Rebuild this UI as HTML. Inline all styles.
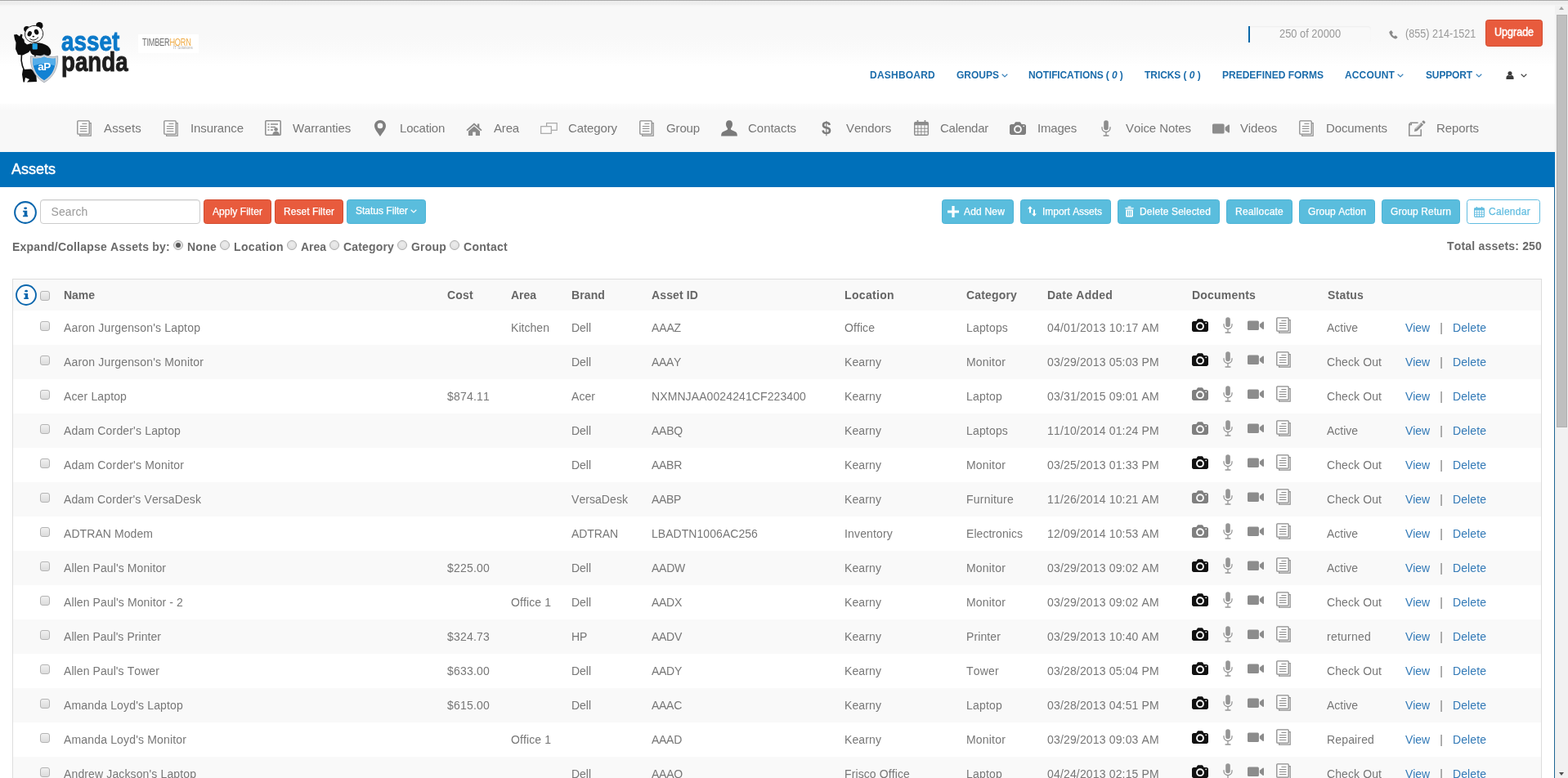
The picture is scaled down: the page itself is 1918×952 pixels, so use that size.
<!DOCTYPE html>
<html lang="en">
<head>
<meta charset="utf-8">
<title>Assets - Asset Panda</title>
<style>
*{box-sizing:border-box}
html,body{margin:0;padding:0;width:1918px;height:952px;overflow:hidden;background:#fff}
body{font-family:"Liberation Sans",sans-serif;font-size:14px;color:#777;position:relative;font-kerning:none}
a{text-decoration:none;color:inherit;cursor:pointer}
svg.ic{display:block}
#page{position:absolute;left:0;top:0;width:1902px;height:952px;overflow:hidden;will-change:transform}
.topline{position:absolute;left:0;top:0;width:1918px;height:8px;background:linear-gradient(#a9a9a9 0,#a9a9a9 1px,#f1f1f1 1px,#ededed 2.5px,#ededed 5px,#f4f4f4 6.5px,rgba(248,248,248,0) 8px);z-index:5}
/* header */
.hdr{position:absolute;left:0;top:0;width:1902px;height:127px;background:linear-gradient(#f8f8f8 0,#f8f8f8 44px,#fbfbfb 64px,#fff 82px,#fff 100%)}
.logo{position:absolute;left:0;top:0}
.logo .panda{position:absolute;left:16px;top:27px}
.logo .w1,.logo .w2{position:absolute;font-weight:700;white-space:nowrap;line-height:1;transform-origin:0 0;-webkit-text-stroke:.9px currentColor}
.logo .w1{left:74.6px;top:34.2px;font-size:33px;color:#0b79c9;transform:scaleX(.845)}
.logo .w2{left:75.2px;top:58.8px;font-size:33px;color:#1d1d1d;transform:scaleX(.84)}
.partner{position:absolute;left:169px;top:42px;width:74px;height:23px;background:#fff}
.partner span{position:absolute;white-space:nowrap;line-height:1;transform-origin:0 0}
.partner .t1{left:5px;top:3.5px;font-size:12.5px;color:#6e6e6e;transform:scaleX(.735);letter-spacing:-.3px}
.partner .t1 em{font-style:normal;color:#efab45}
.partner .t2{left:43px;top:13.5px;font-size:5px;color:#aaa;transform:scaleX(.9)}
.usage{position:absolute;left:1527px;top:32px;width:150px;height:20px;border-radius:4px;background:#f9f9f9;box-shadow:inset 0 1px 2px rgba(0,0,0,.05)}
.usage-bar{position:absolute;left:0;top:0;width:2px;height:20px;background:#0a68a8}
.usage-txt{position:absolute;left:38px;top:0;font-size:14px;line-height:18px;color:#999;white-space:nowrap}
.phone{position:absolute;left:1699px;top:31px;height:20px;font-size:14px;line-height:20px;color:#999;white-space:nowrap}
.phone svg{position:absolute;left:0;top:6px}
.phone span{position:absolute;left:20.4px;top:0}
.upgrade{position:absolute;left:1817px;top:24px;width:70px;height:33px;border-radius:3.5px;background:#e85b3d;border:1px solid #d24c30;color:#fff;font-size:14px;font-weight:400;-webkit-text-stroke:.45px #fff;line-height:29px;white-space:nowrap}
.upgrade span{position:absolute;left:10px;top:0}
.mainnav a{position:absolute;top:83px;height:18px;line-height:18px;font-size:12px;font-weight:700;color:#1b6cab;white-space:nowrap}
.mainnav a i{font-style:italic}
.mainnav a.usr{top:83px}
/* icon nav */
.iconnav{position:absolute;left:0;top:127px;width:1902px;height:59px;background:linear-gradient(#fcfcfc 0,#f8f8f8 9px,#f8f8f8 100%)}
.iconnav .nic{position:absolute;margin-top:-127px}
.iconnav .nt{position:absolute;top:19px;font-size:15px;line-height:22px;color:#777;white-space:nowrap}
.iconnav .dollar{position:absolute;margin-top:-127px;font-size:22px;line-height:20px;font-weight:700;color:#7a7a7a;transform:scaleX(.95);transform-origin:0 0}
/* panel */
.panel{position:absolute;left:-1px;top:186px;width:1903px;height:2000px;border:1px solid #1f6694;border-top:0;background:#fff}
.panel-head{position:absolute;left:0;top:0;width:1902px;height:43px;margin:0;background:#0070ba;color:#fff;font-size:18px;font-weight:400;-webkit-text-stroke:.4px #fff;line-height:43px;padding-left:14px;white-space:nowrap}
.toolbar{position:absolute;left:0;top:-186px}
svg.info{position:absolute}
.search{position:absolute;left:49px;top:244px;width:196px;height:30px;border:1px solid #ccc;border-radius:4px;background:#fff;box-shadow:inset 0 1px 1px rgba(0,0,0,.075)}
.search span{position:absolute;left:12.5px;top:5px;line-height:18px;font-size:14px;color:#999}
.btn{position:absolute;top:244px;height:30px;border-radius:3.5px;font-size:12px;line-height:28px;color:#fff;text-align:center;white-space:nowrap;border:1px solid transparent;-webkit-text-stroke:.25px currentColor}
.btn.red{background:#e85b3d;border-color:#d24c30}
.btn.blue{background:#5abddd;border-color:#4bb3d6}
.btn.outline{background:#fff;border-color:#62bde0;color:#62bde0}
.btn.up{line-height:26px}
.btn.abs svg{position:absolute}
.btn.abs .bt{position:absolute;top:0;text-align:left}
.btn svg{display:inline-block}
.expand{position:absolute;left:0;top:-186px}
.expand .lbl{position:absolute;top:293px;font-size:14px;line-height:18px;font-weight:700;color:#6a6a6a;white-space:nowrap}
.radio{position:absolute;top:294px;width:12px;height:12px;border-radius:50%;border:1px solid #acacac;background:radial-gradient(circle at 50% 40%,#ededed 0,#e0e0e0 70%,#d2d2d2 100%)}
.radio.on:after{content:"";position:absolute;left:2px;top:2px;width:6px;height:6px;border-radius:50%;background:#555}
/* table */
.tablewrap{position:absolute;left:15px;top:155px;width:1871px;border:1px solid #ddd;border-bottom:0}
table{border-collapse:collapse;table-layout:fixed;width:1869px;font-size:14px;color:#777}
th,td{padding:0 0 0 8px;text-align:left;white-space:nowrap;overflow:visible;vertical-align:middle;position:relative}
th{height:38px;font-weight:700;color:#666;background:#f9f9f9}
td{height:42px;font-weight:400}
tbody tr:nth-child(even) td{background:#f9f9f9}
th.c0,td.c0{padding:0}
.cb{position:absolute;left:33px;top:13px;width:12px;height:12px;border:1px solid #b4b4b4;border-radius:3px;background:linear-gradient(#f0f0f0,#dcdcdc)}
th .cb{top:14px}
td.docs svg{position:absolute}
td.act a{color:#337ab7}
td.act .sep{display:inline-block;width:28px;text-align:center;color:#777}
/* scrollbar */
#sb{position:absolute;left:1902px;top:0;width:16px;height:952px;background:#f1f1f1}
#sb .thumb{position:absolute;left:2px;top:18px;width:13px;height:505px;background:#bfbfbf;box-shadow:inset 0 0 0 1px #b0b0b0}
#sb .up,#sb .down{position:absolute;left:5px;width:0;height:0;border-left:3.5px solid transparent;border-right:3.5px solid transparent}
#sb .up{top:8px;border-bottom:4px solid #a3a3a3}
#sb .down{top:945px;border-top:4px solid #505050}

td.st{padding-left:7px}

</style>
</head>
<body>
<div id="page">
<header class="hdr">
<div class="logo">
<svg class="panda" width="56" height="75" viewBox="0 0 56 75" aria-hidden="true">
<!-- body / belly -->
<path d="M12 34 C9 42 10 52 14 60 L26 62 L27 40 L22 32 Z" fill="#fff" stroke="#111" stroke-width="1.6"/>
<!-- raised arm + pointing hand -->
<path d="M1 15.5 L4.5 15 L8 17.5 L9.5 14.5 L11.5 15.5 L11 19 L13.5 21.5 L14 25 L17 27.5 L22 26 L24 31 L19 37 L12 40.5 L6 40 L3 33 L3.5 25 L2 21 Z" fill="#0d0d0d"/>
<!-- leg -->
<path d="M12 58 L22 57.5 L28 62 L29 73 L17 73.5 L20 70 L15 68 L14 73.5 L12.5 73.5 L11 64 Z" fill="#0d0d0d"/>
<!-- head -->
<circle cx="16.8" cy="8.6" r="3.7" fill="#0d0d0d"/><circle cx="32.2" cy="4.4" r="4.3" fill="#0d0d0d"/>
<ellipse cx="25.6" cy="14.6" rx="11.2" ry="10.2" fill="#fff" stroke="#222" stroke-width=".9" transform="rotate(-12 25.6 14.6)"/>
<ellipse cx="20.2" cy="14.2" rx="2.5" ry="3.3" fill="#111" transform="rotate(25 20.2 14.2)"/>
<ellipse cx="28.6" cy="12.2" rx="2.6" ry="3.4" fill="#111" transform="rotate(-25 28.6 12.2)"/>
<ellipse cx="24.8" cy="17.6" rx="1.4" ry=".9" fill="#111"/>
<path d="M20.5 20.5 Q26 24.5 31 18.5" stroke="#111" stroke-width="1" fill="none"/>
<!-- torso + arm resting on shield -->
<path d="M21 27 C27 24 36 25 42 29 C46 32 47 36 46 39 C45 41 42 42 38 41.5 L25 40.5 C21 39 20 34 21 27 Z" fill="#0d0d0d"/>
<rect x="23.6" y="26.2" width="6.2" height="7.4" rx="1" fill="#1fa3e6"/>
<!-- shield -->
<path d="M21.4 41.6 C27 43.2 33 42.4 38 39.8 C43 42.4 49 43.2 54.6 41.6 C55.4 54 51 66.5 38 74 C25 66.5 20.6 54 21.4 41.6 Z" fill="#cfd4d9" stroke="#9097a0" stroke-width=".7"/>
<path d="M24 44.4 C29 45.4 34 44.6 38 42.6 C42 44.6 47 45.4 52 44.4 C52.4 55 48.6 65 38 71.2 C27.4 65 23.6 55 24 44.4 Z" fill="#1282d3"/>
<path d="M24 44.4 C29 45.4 34 44.6 38 42.6 C42 44.6 47 45.4 52 44.4 C52.1 47.6 51.9 50.6 51.2 53.6 C43 50.6 33 50.6 24.8 53.6 C24.1 50.6 23.9 47.6 24 44.4 Z" fill="#55aeea"/>
<text x="38" y="59" text-anchor="middle" font-family="Liberation Sans, sans-serif" font-weight="700" font-size="13.5" fill="#fff" letter-spacing="-.4">aP</text>
</svg>
<span class="w1">asset</span><span class="w2">panda</span>
</div>
<div class="partner"><span class="t1">TIMBER<em>HORN</em></span><span class="t2">IT Solutions</span></div>
<div class="usage"><span class="usage-bar"></span><span class="usage-txt" style="display:inline-block;transform:scaleX(0.919);transform-origin:0 50%">250 of 20000</span></div>
<div class="phone"><svg class="ic" width="10.5" height="10.5" viewBox="0 0 12 12" style="" aria-hidden="true"><path d="M2.6 0.6 C3 0.3 3.5 0.4 3.8 0.8 L5.4 3.2 C5.7 3.6 5.6 4.1 5.2 4.4 L4.2 5.2 C4.8 6.6 5.9 7.8 7.4 8.6 L8.3 7.6 C8.6 7.3 9.1 7.2 9.5 7.5 L11.6 9 C12 9.3 12.1 9.8 11.8 10.2 L11 11.2 C10.4 12 9.4 12.2 8.4 11.9 C4.6 10.7 1.6 7.6 0.5 3.8 C0.2 2.8 0.5 1.9 1.3 1.4 Z" fill="#8a8a8a"/></svg><span style="display:inline-block;transform:scaleX(0.900);transform-origin:0 50%">(855) 214-1521</span></div>
<a class="upgrade"><span style="display:inline-block;transform:scaleX(0.895);transform-origin:0 50%">Upgrade</span></a>
<nav class="mainnav">
<a style="left:1064px"><span style="letter-spacing:.22px">DASHBOARD</span></a>
<a style="left:1170px"><span>GROUPS</span><svg class="ic" width="8" height="5" viewBox="0 0 8 5" style="position:absolute;left:54.8px;top:7px" aria-hidden="true"><path d="M0.7 0.8 L4 4 L7.3 0.8" fill="none" stroke="#3d84bb" stroke-width="1.2"/></svg></a>
<a style="left:1258px"><span style="letter-spacing:-.13px">NOTIFICATIONS ( <i>0</i> )</span></a>
<a style="left:1400px"><span style="letter-spacing:-.06px">TRICKS ( <i>0</i> )</span></a>
<a style="left:1495px"><span>PREDEFINED FORMS</span></a>
<a style="left:1645px"><span style="letter-spacing:.14px">ACCOUNT</span><svg class="ic" width="8" height="5" viewBox="0 0 8 5" style="position:absolute;left:64.2px;top:7px" aria-hidden="true"><path d="M0.7 0.8 L4 4 L7.3 0.8" fill="none" stroke="#3d84bb" stroke-width="1.2"/></svg></a>
<a style="left:1744px"><span style="letter-spacing:-.14px">SUPPORT</span><svg class="ic" width="8" height="5" viewBox="0 0 8 5" style="position:absolute;left:60.6px;top:7px" aria-hidden="true"><path d="M0.7 0.8 L4 4 L7.3 0.8" fill="none" stroke="#3d84bb" stroke-width="1.2"/></svg></a>
<a class="usr" style="left:1841.5px"><svg class="ic" width="10" height="10.4" viewBox="0 0 10 11" style="position:absolute;left:0;top:3.6px" aria-hidden="true"><circle cx="5" cy="2.9" r="2.7" fill="#3c3c3c"/><path d="M0.2 10.8 V8.6 C0.2 6.6 1.6 5.6 3 5.4 C3.6 5.9 4.3 6.1 5 6.1 S6.4 5.9 7 5.4 C8.4 5.6 9.8 6.6 9.8 8.6 V10.8 Z" fill="#3c3c3c"/></svg><svg class="ic" width="8" height="5" viewBox="0 0 8 5" style="position:absolute;left:18px;top:7px" aria-hidden="true"><path d="M0.7 0.8 L4 4 L7.3 0.8" fill="none" stroke="#444" stroke-width="1.2"/></svg></a>
</nav>
</header>
<nav class="iconnav">
<a><span class="nic" style="left:94px;top:147px"><svg class="ic" width="18" height="20" viewBox="0 0 18 20" style="" aria-hidden="true"><path d="M3.6 17.6 V19.2 H17.2 V3.6 H15.6" fill="none" stroke="#8c8c8c" stroke-width="1.2"/><rect x="0.8" y="0.8" width="14.4" height="16.4" rx="1" fill="#fcfcfc" stroke="#8c8c8c" stroke-width="1.3"/><path d="M6.4 4.5h6M3.8 7.5h8.6M3.8 10.5h8.6M3.8 13.5h8.6" stroke="#8c8c8c" stroke-width="1.1"/></svg></span><span class="nt" style="left:127px;letter-spacing:.16px">Assets</span></a>
<a><span class="nic" style="left:200px;top:147px"><svg class="ic" width="18" height="20" viewBox="0 0 18 20" style="" aria-hidden="true"><path d="M3.6 17.6 V19.2 H17.2 V3.6 H15.6" fill="none" stroke="#8c8c8c" stroke-width="1.2"/><rect x="0.8" y="0.8" width="14.4" height="16.4" rx="1" fill="#fcfcfc" stroke="#8c8c8c" stroke-width="1.3"/><path d="M6.4 4.5h6M3.8 7.5h8.6M3.8 10.5h8.6M3.8 13.5h8.6" stroke="#8c8c8c" stroke-width="1.1"/></svg></span><span class="nt" style="left:233px;letter-spacing:-.10px">Insurance</span></a>
<a><span class="nic" style="left:324px;top:147px"><svg class="ic" width="20" height="19" viewBox="0 0 20 19" style="" aria-hidden="true"><rect x="0.8" y="0.8" width="18.4" height="17.4" rx="1" fill="#fbfbfb" stroke="#8c8c8c" stroke-width="1.5"/><path d="M3.5 5h2M7 5h9M3.5 8.5h2M7 8.5h6M3.5 12h2M7 12h3" stroke="#8c8c8c" stroke-width="1.3"/><circle cx="13.6" cy="11.2" r="2.3" fill="#8c8c8c"/><path d="M9.4 18 C9.6 14.6 11.4 13.8 13.6 13.8 S17.6 14.6 17.8 18 Z" fill="#8c8c8c"/></svg></span><span class="nt" style="left:358px;letter-spacing:-.15px">Warranties</span></a>
<a><span class="nic" style="left:458px;top:147px"><svg class="ic" width="14" height="20" viewBox="0 0 14 20" style="" aria-hidden="true"><path fill-rule="evenodd" d="M7 0 C3.1 0 0 3.1 0 7 C0 11.6 5.2 16.6 7 20 C8.8 16.6 14 11.6 14 7 C14 3.1 10.9 0 7 0 Z M7 3.6 A3.3 3.3 0 1 0 7 10.2 A3.3 3.3 0 1 0 7 3.6 Z" fill="#7f7f7f"/></svg></span><span class="nt" style="left:489px;letter-spacing:-.21px">Location</span></a>
<a><span class="nic" style="left:570px;top:149px"><svg class="ic" width="20" height="18" viewBox="0 0 20 18" style="" aria-hidden="true"><path d="M10 1.5 L0.4 10 L1.6 11.3 L10 4 L18.4 11.3 L19.6 10 L16.3 7.1 V2.4 H14 V5 Z" fill="#8a8a8a"/><path d="M10 5.4 L3 11.4 V17 H8.2 V12.4 H11.8 V17 H17 V11.4 Z" fill="#8a8a8a"/></svg></span><span class="nt" style="left:604px;letter-spacing:-.17px">Area</span></a>
<a><span class="nic" style="left:661px;top:150px"><svg class="ic" width="21" height="14" viewBox="0 0 21 14" style="" aria-hidden="true"><rect x="7.6" y="0.7" width="12.6" height="8.6" fill="#fbfbfb" stroke="#a6a6a6" stroke-width="1.2"/><rect x="0.7" y="4.7" width="12.6" height="8.6" fill="#fbfbfb" stroke="#a6a6a6" stroke-width="1.2"/></svg></span><span class="nt" style="left:695px;letter-spacing:-.11px">Category</span></a>
<a><span class="nic" style="left:782px;top:147px"><svg class="ic" width="18" height="20" viewBox="0 0 18 20" style="" aria-hidden="true"><path d="M3.6 17.6 V19.2 H17.2 V3.6 H15.6" fill="none" stroke="#8c8c8c" stroke-width="1.2"/><rect x="0.8" y="0.8" width="14.4" height="16.4" rx="1" fill="#fcfcfc" stroke="#8c8c8c" stroke-width="1.3"/><path d="M6.4 4.5h6M3.8 7.5h8.6M3.8 10.5h8.6M3.8 13.5h8.6" stroke="#8c8c8c" stroke-width="1.1"/></svg></span><span class="nt" style="left:815px;letter-spacing:-.14px">Group</span></a>
<a><span class="nic" style="left:882px;top:147px"><svg class="ic" width="20" height="20" viewBox="0 0 20 20" style="" aria-hidden="true"><path d="M10 0.3 C7.4 0.3 6 2.2 6 5 C6 7 6.8 8.9 8 10 C8.2 11 8 11.6 7.2 12 L2.4 14.2 C0.8 15 0.2 16.6 0.1 19.6 H19.9 C19.8 16.6 19.2 15 17.6 14.2 L12.8 12 C12 11.6 11.8 11 12 10 C13.2 8.9 14 7 14 5 C14 2.2 12.6 0.3 10 0.3 Z" fill="#7a7a7a"/></svg></span><span class="nt" style="left:915px;letter-spacing:-.02px">Contacts</span></a>
<a><span class="dollar" style="left:1005px;top:147px">$</span><span class="nt" style="left:1035px;letter-spacing:-.12px">Vendors</span></a>
<a><span class="nic" style="left:1118px;top:147px"><svg class="ic" width="18" height="19" viewBox="0 0 18 19" style="" aria-hidden="true"><rect x="0.7" y="2.7" width="16.6" height="15.6" rx="1.2" fill="#fbfbfb" stroke="#8c8c8c" stroke-width="1.4"/><rect x="0.7" y="2.7" width="16.6" height="3.6" fill="#8c8c8c"/><path d="M4.5 0.5v4M13.5 0.5v4" stroke="#8c8c8c" stroke-width="1.8" stroke-linecap="round"/><path d="M4.8 6.3V18M8.9 6.3V18M13 6.3V18M1 10.2H17M1 14.1H17" stroke="#8c8c8c" stroke-width="1"/></svg></span><span class="nt" style="left:1150px;letter-spacing:-.23px">Calendar</span></a>
<a><span class="nic" style="left:1235px;top:149px"><svg class="ic" width="20" height="16" viewBox="0 0 20 16" style="" aria-hidden="true"><path fill-rule="evenodd" d="M2.2 3 H5.4 L6.6 0.9 C6.8 0.5 7.2 0.3 7.6 0.3 H12.4 C12.8 0.3 13.2 0.5 13.4 0.9 L14.6 3 H17.8 C19 3 20 4 20 5.2 V13.8 C20 15 19 16 17.8 16 H2.2 C1 16 0 15 0 13.8 V5.2 C0 4 1 3 2.2 3 Z M10 4.3 A4.9 4.9 0 1 0 10 14.1 A4.9 4.9 0 1 0 10 4.3 Z" fill="#7f7f7f"/><circle cx="10" cy="9.2" r="3" fill="#7f7f7f"/><circle cx="17.2" cy="5.4" r="0.8" fill="#fff"/></svg></span><span class="nt" style="left:1269px;letter-spacing:-.20px">Images</span></a>
<a><span class="nic" style="left:1347px;top:147px"><svg class="ic" width="12" height="20" viewBox="0 0 12 20" style="" aria-hidden="true"><rect x="3.2" y="0.3" width="5.6" height="12" rx="2.8" fill="#8c8c8c"/><path d="M1 8.2 V9.6 C1 12.4 3.2 14.6 6 14.6 C8.8 14.6 11 12.4 11 9.6 V8.2" fill="none" stroke="#8c8c8c" stroke-width="1.3"/><path d="M6 14.6 V18.6 M2.6 19 H9.4" stroke="#8c8c8c" stroke-width="1.3"/></svg></span><span class="nt" style="left:1377px;letter-spacing:-.08px">Voice Notes</span></a>
<a><span class="nic" style="left:1483px;top:150.5px"><svg class="ic" width="21" height="13" viewBox="0 0 21 13" style="" aria-hidden="true"><rect x="0" y="0.5" width="14.6" height="12" rx="1.6" fill="#8c8c8c"/><path d="M15.6 4.8 L19.8 1.6 C20.3 1.3 21 1.6 21 2.3 V10.7 C21 11.4 20.3 11.7 19.8 11.4 L15.6 8.2 Z" fill="#8c8c8c"/></svg></span><span class="nt" style="left:1517px;letter-spacing:-.14px">Videos</span></a>
<a><span class="nic" style="left:1589px;top:147px"><svg class="ic" width="18" height="20" viewBox="0 0 18 20" style="" aria-hidden="true"><path d="M3.6 17.6 V19.2 H17.2 V3.6 H15.6" fill="none" stroke="#8c8c8c" stroke-width="1.2"/><rect x="0.8" y="0.8" width="14.4" height="16.4" rx="1" fill="#fcfcfc" stroke="#8c8c8c" stroke-width="1.3"/><path d="M6.4 4.5h6M3.8 7.5h8.6M3.8 10.5h8.6M3.8 13.5h8.6" stroke="#8c8c8c" stroke-width="1.1"/></svg></span><span class="nt" style="left:1622px;letter-spacing:-.10px">Documents</span></a>
<a><span class="nic" style="left:1723px;top:147px"><svg class="ic" width="21" height="20" viewBox="0 0 21 20" style="" aria-hidden="true"><path d="M11.6 3.2 H2.6 L0.8 5 V19 H15.2 V11.2" fill="none" stroke="#8c8c8c" stroke-width="1.5"/><path d="M0.8 5.6 H3.4 V3.2" fill="none" stroke="#8c8c8c" stroke-width="1.2"/><path d="M15.4 2.9 L18.1 5.6 L10.4 13.3 L6.9 14.1 L7.7 10.6 Z" fill="#8c8c8c"/><path d="M16.2 2.1 L17.5 0.8 C17.9 0.4 18.5 0.4 18.9 0.8 L20.2 2.1 C20.6 2.5 20.6 3.1 20.2 3.5 L18.9 4.8 Z" fill="#8c8c8c"/><path d="M8.6 10.9 L14.9 4.6" stroke="#f8f8f8" stroke-width="0.9"/></svg></span><span class="nt" style="left:1757px;letter-spacing:-.07px">Reports</span></a>
</nav>
<section class="panel">
<h1 class="panel-head"><span>Assets</span></h1>
<div class="toolbar">
<svg class="ic info" width="28" height="28" viewBox="0 0 26 26" style="left:17px;top:246px" aria-hidden="true"><circle cx="13" cy="13" r="11.95" fill="#fdfdfd" stroke="#0a66ad" stroke-width="1.9"/><ellipse cx="13.15" cy="8.2" rx="1.85" ry="1.35" fill="#0a66ad"/><path d="M10.3 11 H15.1 V16.3 H15.9 V17.9 H10.3 V16.3 H11.7 V12.5 H10.3 Z" fill="#0a66ad"/></svg><div class="search"><span style="letter-spacing:.11px">Search</span></div>
<a class="btn abs red" style="left:249px;width:83px"><span class="bt" style="left:10px;letter-spacing:.08px">Apply Filter</span></a>
<a class="btn abs red" style="left:336px;width:84px"><span class="bt" style="left:10px;letter-spacing:.05px">Reset Filter</span></a>
<a class="btn abs blue up" style="left:424px;width:97px"><span class="bt" style="left:10px">Status Filter<svg class="ic" width="8" height="5" viewBox="0 0 8 5" style="margin-left:3px;position:relative;top:-1px" aria-hidden="true"><path d="M0.7 0.8 L4 4 L7.3 0.8" fill="none" stroke="#fff" stroke-width="1.2"/></svg></span></a>
<a class="btn blue abs" style="left:1152px;width:88px"><svg class="ic" width="14" height="14" viewBox="0 0 13 13" style="left:6px;top:7px" aria-hidden="true"><path d="M5 0 H8 V5 H13 V8 H8 V13 H5 V8 H0 V5 H5 Z" fill="#fff"/></svg><span class="bt" style="left:26px;letter-spacing:.19px">Add New</span></a>
<a class="btn blue abs" style="left:1248px;width:111px"><svg class="ic" width="11" height="13" viewBox="0 0 11 13" style="left:8px;top:7px" aria-hidden="true"><path d="M3 0.2 L6 3.6 H4 V8.4 H2 V3.6 H0 Z" fill="#fff"/><path d="M8 12.8 L5 9.4 H7 V4.6 H9 V9.4 H11 Z" fill="#fff"/></svg><span class="bt" style="left:26px;letter-spacing:-.03px">Import Assets</span></a>
<a class="btn blue abs" style="left:1367px;width:125px"><svg class="ic" width="11" height="14" viewBox="0 0 11 14" style="left:8px;top:7px" aria-hidden="true"><path d="M0.3 2.2 H10.7 V3.6 H0.3 Z M3.6 0.4 H7.4 V1.8 H3.6 Z" fill="#fff"/><path fill-rule="evenodd" d="M1.2 4.4 H9.8 V12.6 C9.8 13.1 9.4 13.5 8.9 13.5 H2.1 C1.6 13.5 1.2 13.1 1.2 12.6 Z M3 5.8 V12 H4 V5.8 Z M5 5.8 V12 H6 V5.8 Z M7 5.8 V12 H8 V5.8 Z" fill="#fff"/></svg><span class="bt" style="left:26px;letter-spacing:.15px">Delete Selected</span></a>
<a class="btn blue abs" style="left:1500px;width:81px"><span class="bt" style="left:10px;letter-spacing:.23px">Reallocate</span></a>
<a class="btn blue abs" style="left:1589px;width:93px"><span class="bt" style="left:10px;letter-spacing:.08px">Group Action</span></a>
<a class="btn blue abs" style="left:1690px;width:96px"><span class="bt" style="left:10px;letter-spacing:.11px">Group Return</span></a>
<a class="btn outline abs" style="left:1794px;width:90px"><svg class="ic" width="13" height="13" viewBox="0 0 13 13" style="left:8px;top:8px" aria-hidden="true"><rect x="0.6" y="1.8" width="11.8" height="10.6" rx="0.8" fill="none" stroke="#62bde0" stroke-width="1.1"/><rect x="0.6" y="1.8" width="11.8" height="2.6" fill="#62bde0"/><path d="M3.4 0.3v2.6M9.6 0.3v2.6" stroke="#62bde0" stroke-width="1.4" stroke-linecap="round"/><path d="M3.6 4.4V12M6.5 4.4V12M9.4 4.4V12M1 7H12M1 9.6H12" stroke="#62bde0" stroke-width="0.8"/></svg><span class="bt" style="left:26px;letter-spacing:.29px">Calendar</span></a>
</div>
<div class="expand">
<span class="lbl" style="left:15px;letter-spacing:.21px">Expand/Collapse Assets by:</span>
<span class="radio on" style="left:212px"></span><span class="lbl" style="left:229px;letter-spacing:.25px">None</span>
<span class="radio" style="left:269px"></span><span class="lbl" style="left:286px;letter-spacing:.33px">Location</span>
<span class="radio" style="left:351px"></span><span class="lbl" style="left:368px;letter-spacing:-.03px">Area</span>
<span class="radio" style="left:403px"></span><span class="lbl" style="left:420px;letter-spacing:.17px">Category</span>
<span class="radio" style="left:486px"></span><span class="lbl" style="left:503px;letter-spacing:.20px">Group</span>
<span class="radio" style="left:550px"></span><span class="lbl" style="left:567px;letter-spacing:.27px">Contact</span>
<span class="lbl total" style="left:1770px;top:292px;letter-spacing:.19px">Total assets: 250</span>
</div>
<div class="tablewrap">
<table>
<colgroup><col style="width:54px"><col style="width:469px"><col style="width:78px"><col style="width:74px"><col style="width:98px"><col style="width:236px"><col style="width:149px"><col style="width:99px"><col style="width:177px"><col style="width:166px"><col style="width:95px"><col style="width:174px"></colgroup>
<thead>
<tr><th class="c0"><svg class="ic info" width="26" height="26" viewBox="0 0 26 26" style="left:3px;top:6px" aria-hidden="true"><circle cx="13" cy="13" r="11.95" fill="#fdfdfd" stroke="#0a66ad" stroke-width="1.9"/><ellipse cx="13.15" cy="8.2" rx="1.85" ry="1.35" fill="#0a66ad"/><path d="M10.3 11 H15.1 V16.3 H15.9 V17.9 H10.3 V16.3 H11.7 V12.5 H10.3 Z" fill="#0a66ad"/></svg><span class="cb"></span></th><th style="letter-spacing:-.03px">Name</th><th style="letter-spacing:.22px">Cost</th><th style="letter-spacing:-.03px">Area</th><th style="letter-spacing:.11px">Brand</th><th style="letter-spacing:.12px">Asset ID</th><th style="letter-spacing:.33px">Location</th><th style="letter-spacing:.17px">Category</th><th style="letter-spacing:.22px">Date Added</th><th style="letter-spacing:.20px">Documents</th><th style="letter-spacing:.20px">Status</th><th></th></tr>
</thead>
<tbody>
<tr><td class="c0"><span class="cb"></span></td><td style="letter-spacing:.17px">Aaron Jurgenson's Laptop</td><td></td><td style="letter-spacing:.04px">Kitchen</td><td style="letter-spacing:-.03px">Dell</td><td style="letter-spacing:-.14px">AAAZ</td><td style="letter-spacing:.07px">Office</td><td style="letter-spacing:.17px">Laptops</td><td style="letter-spacing:.16px">04/01/2013 10:17 AM</td><td class="docs"><svg class="ic" width="20" height="16" viewBox="0 0 20 16" style="left:8px;top:10px" aria-hidden="true"><path fill-rule="evenodd" d="M2.2 3 H5.4 L6.6 0.9 C6.8 0.5 7.2 0.3 7.6 0.3 H12.4 C12.8 0.3 13.2 0.5 13.4 0.9 L14.6 3 H17.8 C19 3 20 4 20 5.2 V13.8 C20 15 19 16 17.8 16 H2.2 C1 16 0 15 0 13.8 V5.2 C0 4 1 3 2.2 3 Z M10 4.3 A4.9 4.9 0 1 0 10 14.1 A4.9 4.9 0 1 0 10 4.3 Z" fill="#111"/><circle cx="10" cy="9.2" r="3" fill="#111"/><circle cx="17.2" cy="5.4" r="0.8" fill="#fff"/></svg><svg class="ic" width="12" height="20" viewBox="0 0 12 20" style="left:46px;top:8px" aria-hidden="true"><rect x="3.2" y="0.3" width="5.6" height="12" rx="2.8" fill="#959595"/><path d="M1 8.2 V9.6 C1 12.4 3.2 14.6 6 14.6 C8.8 14.6 11 12.4 11 9.6 V8.2" fill="none" stroke="#959595" stroke-width="1.3"/><path d="M6 14.6 V18.6 M2.6 19 H9.4" stroke="#959595" stroke-width="1.3"/></svg><svg class="ic" width="20" height="12.5" viewBox="0 0 21 13" style="left:76px;top:11.5px" aria-hidden="true"><rect x="0" y="0.5" width="14.6" height="12" rx="1.6" fill="#8c8c8c"/><path d="M15.6 4.8 L19.8 1.6 C20.3 1.3 21 1.6 21 2.3 V10.7 C21 11.4 20.3 11.7 19.8 11.4 L15.6 8.2 Z" fill="#8c8c8c"/></svg><svg class="ic" width="18" height="20" viewBox="0 0 18 20" style="left:111px;top:8px" aria-hidden="true"><path d="M3.6 17.6 V19.2 H17.2 V3.6 H15.6" fill="none" stroke="#8c8c8c" stroke-width="1.2"/><rect x="0.8" y="0.8" width="14.4" height="16.4" rx="1" fill="#fcfcfc" stroke="#8c8c8c" stroke-width="1.3"/><path d="M6.4 4.5h6M3.8 7.5h8.6M3.8 10.5h8.6M3.8 13.5h8.6" stroke="#8c8c8c" stroke-width="1.1"/></svg></td><td class="st" style="letter-spacing:-.02px">Active</td><td class="act"><a style="letter-spacing:-.09px">View</a><span class="sep">|</span><a style="letter-spacing:.09px">Delete</a></td></tr>
<tr><td class="c0"><span class="cb"></span></td><td style="letter-spacing:.17px">Aaron Jurgenson's Monitor</td><td></td><td></td><td style="letter-spacing:-.03px">Dell</td><td style="letter-spacing:-.34px">AAAY</td><td style="letter-spacing:.11px">Kearny</td><td style="letter-spacing:.19px">Monitor</td><td style="letter-spacing:.16px">03/29/2013 05:03 PM</td><td class="docs"><svg class="ic" width="20" height="16" viewBox="0 0 20 16" style="left:8px;top:10px" aria-hidden="true"><path fill-rule="evenodd" d="M2.2 3 H5.4 L6.6 0.9 C6.8 0.5 7.2 0.3 7.6 0.3 H12.4 C12.8 0.3 13.2 0.5 13.4 0.9 L14.6 3 H17.8 C19 3 20 4 20 5.2 V13.8 C20 15 19 16 17.8 16 H2.2 C1 16 0 15 0 13.8 V5.2 C0 4 1 3 2.2 3 Z M10 4.3 A4.9 4.9 0 1 0 10 14.1 A4.9 4.9 0 1 0 10 4.3 Z" fill="#111"/><circle cx="10" cy="9.2" r="3" fill="#111"/><circle cx="17.2" cy="5.4" r="0.8" fill="#fff"/></svg><svg class="ic" width="12" height="20" viewBox="0 0 12 20" style="left:46px;top:8px" aria-hidden="true"><rect x="3.2" y="0.3" width="5.6" height="12" rx="2.8" fill="#959595"/><path d="M1 8.2 V9.6 C1 12.4 3.2 14.6 6 14.6 C8.8 14.6 11 12.4 11 9.6 V8.2" fill="none" stroke="#959595" stroke-width="1.3"/><path d="M6 14.6 V18.6 M2.6 19 H9.4" stroke="#959595" stroke-width="1.3"/></svg><svg class="ic" width="20" height="12.5" viewBox="0 0 21 13" style="left:76px;top:11.5px" aria-hidden="true"><rect x="0" y="0.5" width="14.6" height="12" rx="1.6" fill="#8c8c8c"/><path d="M15.6 4.8 L19.8 1.6 C20.3 1.3 21 1.6 21 2.3 V10.7 C21 11.4 20.3 11.7 19.8 11.4 L15.6 8.2 Z" fill="#8c8c8c"/></svg><svg class="ic" width="18" height="20" viewBox="0 0 18 20" style="left:111px;top:8px" aria-hidden="true"><path d="M3.6 17.6 V19.2 H17.2 V3.6 H15.6" fill="none" stroke="#8c8c8c" stroke-width="1.2"/><rect x="0.8" y="0.8" width="14.4" height="16.4" rx="1" fill="#fcfcfc" stroke="#8c8c8c" stroke-width="1.3"/><path d="M6.4 4.5h6M3.8 7.5h8.6M3.8 10.5h8.6M3.8 13.5h8.6" stroke="#8c8c8c" stroke-width="1.1"/></svg></td><td class="st" style="letter-spacing:.10px">Check Out</td><td class="act"><a style="letter-spacing:-.09px">View</a><span class="sep">|</span><a style="letter-spacing:.09px">Delete</a></td></tr>
<tr><td class="c0"><span class="cb"></span></td><td style="letter-spacing:.14px">Acer Laptop</td><td style="letter-spacing:.20px">$874.11</td><td></td><td style="letter-spacing:.05px">Acer</td><td style="letter-spacing:.10px">NXMNJAA0024241CF223400</td><td style="letter-spacing:.11px">Kearny</td><td style="letter-spacing:.20px">Laptop</td><td style="letter-spacing:.16px">03/31/2015 09:01 AM</td><td class="docs"><svg class="ic" width="20" height="16" viewBox="0 0 20 16" style="left:8px;top:10px" aria-hidden="true"><path fill-rule="evenodd" d="M2.2 3 H5.4 L6.6 0.9 C6.8 0.5 7.2 0.3 7.6 0.3 H12.4 C12.8 0.3 13.2 0.5 13.4 0.9 L14.6 3 H17.8 C19 3 20 4 20 5.2 V13.8 C20 15 19 16 17.8 16 H2.2 C1 16 0 15 0 13.8 V5.2 C0 4 1 3 2.2 3 Z M10 4.3 A4.9 4.9 0 1 0 10 14.1 A4.9 4.9 0 1 0 10 4.3 Z" fill="#7f7f7f"/><circle cx="10" cy="9.2" r="3" fill="#7f7f7f"/><circle cx="17.2" cy="5.4" r="0.8" fill="#fff"/></svg><svg class="ic" width="12" height="20" viewBox="0 0 12 20" style="left:46px;top:8px" aria-hidden="true"><rect x="3.2" y="0.3" width="5.6" height="12" rx="2.8" fill="#959595"/><path d="M1 8.2 V9.6 C1 12.4 3.2 14.6 6 14.6 C8.8 14.6 11 12.4 11 9.6 V8.2" fill="none" stroke="#959595" stroke-width="1.3"/><path d="M6 14.6 V18.6 M2.6 19 H9.4" stroke="#959595" stroke-width="1.3"/></svg><svg class="ic" width="20" height="12.5" viewBox="0 0 21 13" style="left:76px;top:11.5px" aria-hidden="true"><rect x="0" y="0.5" width="14.6" height="12" rx="1.6" fill="#8c8c8c"/><path d="M15.6 4.8 L19.8 1.6 C20.3 1.3 21 1.6 21 2.3 V10.7 C21 11.4 20.3 11.7 19.8 11.4 L15.6 8.2 Z" fill="#8c8c8c"/></svg><svg class="ic" width="18" height="20" viewBox="0 0 18 20" style="left:111px;top:8px" aria-hidden="true"><path d="M3.6 17.6 V19.2 H17.2 V3.6 H15.6" fill="none" stroke="#8c8c8c" stroke-width="1.2"/><rect x="0.8" y="0.8" width="14.4" height="16.4" rx="1" fill="#fcfcfc" stroke="#8c8c8c" stroke-width="1.3"/><path d="M6.4 4.5h6M3.8 7.5h8.6M3.8 10.5h8.6M3.8 13.5h8.6" stroke="#8c8c8c" stroke-width="1.1"/></svg></td><td class="st" style="letter-spacing:.10px">Check Out</td><td class="act"><a style="letter-spacing:-.09px">View</a><span class="sep">|</span><a style="letter-spacing:.09px">Delete</a></td></tr>
<tr><td class="c0"><span class="cb"></span></td><td style="letter-spacing:.17px">Adam Corder's Laptop</td><td></td><td></td><td style="letter-spacing:-.03px">Dell</td><td style="letter-spacing:-.23px">AABQ</td><td style="letter-spacing:.11px">Kearny</td><td style="letter-spacing:.17px">Laptops</td><td style="letter-spacing:.16px">11/10/2014 01:24 PM</td><td class="docs"><svg class="ic" width="20" height="16" viewBox="0 0 20 16" style="left:8px;top:10px" aria-hidden="true"><path fill-rule="evenodd" d="M2.2 3 H5.4 L6.6 0.9 C6.8 0.5 7.2 0.3 7.6 0.3 H12.4 C12.8 0.3 13.2 0.5 13.4 0.9 L14.6 3 H17.8 C19 3 20 4 20 5.2 V13.8 C20 15 19 16 17.8 16 H2.2 C1 16 0 15 0 13.8 V5.2 C0 4 1 3 2.2 3 Z M10 4.3 A4.9 4.9 0 1 0 10 14.1 A4.9 4.9 0 1 0 10 4.3 Z" fill="#7f7f7f"/><circle cx="10" cy="9.2" r="3" fill="#7f7f7f"/><circle cx="17.2" cy="5.4" r="0.8" fill="#fff"/></svg><svg class="ic" width="12" height="20" viewBox="0 0 12 20" style="left:46px;top:8px" aria-hidden="true"><rect x="3.2" y="0.3" width="5.6" height="12" rx="2.8" fill="#959595"/><path d="M1 8.2 V9.6 C1 12.4 3.2 14.6 6 14.6 C8.8 14.6 11 12.4 11 9.6 V8.2" fill="none" stroke="#959595" stroke-width="1.3"/><path d="M6 14.6 V18.6 M2.6 19 H9.4" stroke="#959595" stroke-width="1.3"/></svg><svg class="ic" width="20" height="12.5" viewBox="0 0 21 13" style="left:76px;top:11.5px" aria-hidden="true"><rect x="0" y="0.5" width="14.6" height="12" rx="1.6" fill="#8c8c8c"/><path d="M15.6 4.8 L19.8 1.6 C20.3 1.3 21 1.6 21 2.3 V10.7 C21 11.4 20.3 11.7 19.8 11.4 L15.6 8.2 Z" fill="#8c8c8c"/></svg><svg class="ic" width="18" height="20" viewBox="0 0 18 20" style="left:111px;top:8px" aria-hidden="true"><path d="M3.6 17.6 V19.2 H17.2 V3.6 H15.6" fill="none" stroke="#8c8c8c" stroke-width="1.2"/><rect x="0.8" y="0.8" width="14.4" height="16.4" rx="1" fill="#fcfcfc" stroke="#8c8c8c" stroke-width="1.3"/><path d="M6.4 4.5h6M3.8 7.5h8.6M3.8 10.5h8.6M3.8 13.5h8.6" stroke="#8c8c8c" stroke-width="1.1"/></svg></td><td class="st" style="letter-spacing:-.02px">Active</td><td class="act"><a style="letter-spacing:-.09px">View</a><span class="sep">|</span><a style="letter-spacing:.09px">Delete</a></td></tr>
<tr><td class="c0"><span class="cb"></span></td><td style="letter-spacing:.17px">Adam Corder's Monitor</td><td></td><td></td><td style="letter-spacing:-.03px">Dell</td><td style="letter-spacing:-.28px">AABR</td><td style="letter-spacing:.11px">Kearny</td><td style="letter-spacing:.19px">Monitor</td><td style="letter-spacing:.16px">03/25/2013 01:33 PM</td><td class="docs"><svg class="ic" width="20" height="16" viewBox="0 0 20 16" style="left:8px;top:10px" aria-hidden="true"><path fill-rule="evenodd" d="M2.2 3 H5.4 L6.6 0.9 C6.8 0.5 7.2 0.3 7.6 0.3 H12.4 C12.8 0.3 13.2 0.5 13.4 0.9 L14.6 3 H17.8 C19 3 20 4 20 5.2 V13.8 C20 15 19 16 17.8 16 H2.2 C1 16 0 15 0 13.8 V5.2 C0 4 1 3 2.2 3 Z M10 4.3 A4.9 4.9 0 1 0 10 14.1 A4.9 4.9 0 1 0 10 4.3 Z" fill="#111"/><circle cx="10" cy="9.2" r="3" fill="#111"/><circle cx="17.2" cy="5.4" r="0.8" fill="#fff"/></svg><svg class="ic" width="12" height="20" viewBox="0 0 12 20" style="left:46px;top:8px" aria-hidden="true"><rect x="3.2" y="0.3" width="5.6" height="12" rx="2.8" fill="#959595"/><path d="M1 8.2 V9.6 C1 12.4 3.2 14.6 6 14.6 C8.8 14.6 11 12.4 11 9.6 V8.2" fill="none" stroke="#959595" stroke-width="1.3"/><path d="M6 14.6 V18.6 M2.6 19 H9.4" stroke="#959595" stroke-width="1.3"/></svg><svg class="ic" width="20" height="12.5" viewBox="0 0 21 13" style="left:76px;top:11.5px" aria-hidden="true"><rect x="0" y="0.5" width="14.6" height="12" rx="1.6" fill="#8c8c8c"/><path d="M15.6 4.8 L19.8 1.6 C20.3 1.3 21 1.6 21 2.3 V10.7 C21 11.4 20.3 11.7 19.8 11.4 L15.6 8.2 Z" fill="#8c8c8c"/></svg><svg class="ic" width="18" height="20" viewBox="0 0 18 20" style="left:111px;top:8px" aria-hidden="true"><path d="M3.6 17.6 V19.2 H17.2 V3.6 H15.6" fill="none" stroke="#8c8c8c" stroke-width="1.2"/><rect x="0.8" y="0.8" width="14.4" height="16.4" rx="1" fill="#fcfcfc" stroke="#8c8c8c" stroke-width="1.3"/><path d="M6.4 4.5h6M3.8 7.5h8.6M3.8 10.5h8.6M3.8 13.5h8.6" stroke="#8c8c8c" stroke-width="1.1"/></svg></td><td class="st" style="letter-spacing:.10px">Check Out</td><td class="act"><a style="letter-spacing:-.09px">View</a><span class="sep">|</span><a style="letter-spacing:.09px">Delete</a></td></tr>
<tr><td class="c0"><span class="cb"></span></td><td style="letter-spacing:.12px">Adam Corder's VersaDesk</td><td></td><td></td><td style="letter-spacing:.06px">VersaDesk</td><td style="letter-spacing:-.34px">AABP</td><td style="letter-spacing:.11px">Kearny</td><td style="letter-spacing:.22px">Furniture</td><td style="letter-spacing:.16px">11/26/2014 10:21 AM</td><td class="docs"><svg class="ic" width="20" height="16" viewBox="0 0 20 16" style="left:8px;top:10px" aria-hidden="true"><path fill-rule="evenodd" d="M2.2 3 H5.4 L6.6 0.9 C6.8 0.5 7.2 0.3 7.6 0.3 H12.4 C12.8 0.3 13.2 0.5 13.4 0.9 L14.6 3 H17.8 C19 3 20 4 20 5.2 V13.8 C20 15 19 16 17.8 16 H2.2 C1 16 0 15 0 13.8 V5.2 C0 4 1 3 2.2 3 Z M10 4.3 A4.9 4.9 0 1 0 10 14.1 A4.9 4.9 0 1 0 10 4.3 Z" fill="#7f7f7f"/><circle cx="10" cy="9.2" r="3" fill="#7f7f7f"/><circle cx="17.2" cy="5.4" r="0.8" fill="#fff"/></svg><svg class="ic" width="12" height="20" viewBox="0 0 12 20" style="left:46px;top:8px" aria-hidden="true"><rect x="3.2" y="0.3" width="5.6" height="12" rx="2.8" fill="#959595"/><path d="M1 8.2 V9.6 C1 12.4 3.2 14.6 6 14.6 C8.8 14.6 11 12.4 11 9.6 V8.2" fill="none" stroke="#959595" stroke-width="1.3"/><path d="M6 14.6 V18.6 M2.6 19 H9.4" stroke="#959595" stroke-width="1.3"/></svg><svg class="ic" width="20" height="12.5" viewBox="0 0 21 13" style="left:76px;top:11.5px" aria-hidden="true"><rect x="0" y="0.5" width="14.6" height="12" rx="1.6" fill="#8c8c8c"/><path d="M15.6 4.8 L19.8 1.6 C20.3 1.3 21 1.6 21 2.3 V10.7 C21 11.4 20.3 11.7 19.8 11.4 L15.6 8.2 Z" fill="#8c8c8c"/></svg><svg class="ic" width="18" height="20" viewBox="0 0 18 20" style="left:111px;top:8px" aria-hidden="true"><path d="M3.6 17.6 V19.2 H17.2 V3.6 H15.6" fill="none" stroke="#8c8c8c" stroke-width="1.2"/><rect x="0.8" y="0.8" width="14.4" height="16.4" rx="1" fill="#fcfcfc" stroke="#8c8c8c" stroke-width="1.3"/><path d="M6.4 4.5h6M3.8 7.5h8.6M3.8 10.5h8.6M3.8 13.5h8.6" stroke="#8c8c8c" stroke-width="1.1"/></svg></td><td class="st" style="letter-spacing:.10px">Check Out</td><td class="act"><a style="letter-spacing:-.09px">View</a><span class="sep">|</span><a style="letter-spacing:.09px">Delete</a></td></tr>
<tr><td class="c0"><span class="cb"></span></td><td style="letter-spacing:.07px">ADTRAN Modem</td><td></td><td></td><td style="letter-spacing:-.09px">ADTRAN</td><td style="letter-spacing:.05px">LBADTN1006AC256</td><td style="letter-spacing:.16px">Inventory</td><td style="letter-spacing:.05px">Electronics</td><td style="letter-spacing:.16px">12/09/2014 10:53 AM</td><td class="docs"><svg class="ic" width="20" height="16" viewBox="0 0 20 16" style="left:8px;top:10px" aria-hidden="true"><path fill-rule="evenodd" d="M2.2 3 H5.4 L6.6 0.9 C6.8 0.5 7.2 0.3 7.6 0.3 H12.4 C12.8 0.3 13.2 0.5 13.4 0.9 L14.6 3 H17.8 C19 3 20 4 20 5.2 V13.8 C20 15 19 16 17.8 16 H2.2 C1 16 0 15 0 13.8 V5.2 C0 4 1 3 2.2 3 Z M10 4.3 A4.9 4.9 0 1 0 10 14.1 A4.9 4.9 0 1 0 10 4.3 Z" fill="#7f7f7f"/><circle cx="10" cy="9.2" r="3" fill="#7f7f7f"/><circle cx="17.2" cy="5.4" r="0.8" fill="#fff"/></svg><svg class="ic" width="12" height="20" viewBox="0 0 12 20" style="left:46px;top:8px" aria-hidden="true"><rect x="3.2" y="0.3" width="5.6" height="12" rx="2.8" fill="#959595"/><path d="M1 8.2 V9.6 C1 12.4 3.2 14.6 6 14.6 C8.8 14.6 11 12.4 11 9.6 V8.2" fill="none" stroke="#959595" stroke-width="1.3"/><path d="M6 14.6 V18.6 M2.6 19 H9.4" stroke="#959595" stroke-width="1.3"/></svg><svg class="ic" width="20" height="12.5" viewBox="0 0 21 13" style="left:76px;top:11.5px" aria-hidden="true"><rect x="0" y="0.5" width="14.6" height="12" rx="1.6" fill="#8c8c8c"/><path d="M15.6 4.8 L19.8 1.6 C20.3 1.3 21 1.6 21 2.3 V10.7 C21 11.4 20.3 11.7 19.8 11.4 L15.6 8.2 Z" fill="#8c8c8c"/></svg><svg class="ic" width="18" height="20" viewBox="0 0 18 20" style="left:111px;top:8px" aria-hidden="true"><path d="M3.6 17.6 V19.2 H17.2 V3.6 H15.6" fill="none" stroke="#8c8c8c" stroke-width="1.2"/><rect x="0.8" y="0.8" width="14.4" height="16.4" rx="1" fill="#fcfcfc" stroke="#8c8c8c" stroke-width="1.3"/><path d="M6.4 4.5h6M3.8 7.5h8.6M3.8 10.5h8.6M3.8 13.5h8.6" stroke="#8c8c8c" stroke-width="1.1"/></svg></td><td class="st" style="letter-spacing:-.02px">Active</td><td class="act"><a style="letter-spacing:-.09px">View</a><span class="sep">|</span><a style="letter-spacing:.09px">Delete</a></td></tr>
<tr><td class="c0"><span class="cb"></span></td><td style="letter-spacing:.09px">Allen Paul's Monitor</td><td style="letter-spacing:.20px">$225.00</td><td></td><td style="letter-spacing:-.03px">Dell</td><td style="letter-spacing:-.25px">AADW</td><td style="letter-spacing:.11px">Kearny</td><td style="letter-spacing:.19px">Monitor</td><td style="letter-spacing:.16px">03/29/2013 09:02 AM</td><td class="docs"><svg class="ic" width="20" height="16" viewBox="0 0 20 16" style="left:8px;top:10px" aria-hidden="true"><path fill-rule="evenodd" d="M2.2 3 H5.4 L6.6 0.9 C6.8 0.5 7.2 0.3 7.6 0.3 H12.4 C12.8 0.3 13.2 0.5 13.4 0.9 L14.6 3 H17.8 C19 3 20 4 20 5.2 V13.8 C20 15 19 16 17.8 16 H2.2 C1 16 0 15 0 13.8 V5.2 C0 4 1 3 2.2 3 Z M10 4.3 A4.9 4.9 0 1 0 10 14.1 A4.9 4.9 0 1 0 10 4.3 Z" fill="#111"/><circle cx="10" cy="9.2" r="3" fill="#111"/><circle cx="17.2" cy="5.4" r="0.8" fill="#fff"/></svg><svg class="ic" width="12" height="20" viewBox="0 0 12 20" style="left:46px;top:8px" aria-hidden="true"><rect x="3.2" y="0.3" width="5.6" height="12" rx="2.8" fill="#959595"/><path d="M1 8.2 V9.6 C1 12.4 3.2 14.6 6 14.6 C8.8 14.6 11 12.4 11 9.6 V8.2" fill="none" stroke="#959595" stroke-width="1.3"/><path d="M6 14.6 V18.6 M2.6 19 H9.4" stroke="#959595" stroke-width="1.3"/></svg><svg class="ic" width="20" height="12.5" viewBox="0 0 21 13" style="left:76px;top:11.5px" aria-hidden="true"><rect x="0" y="0.5" width="14.6" height="12" rx="1.6" fill="#8c8c8c"/><path d="M15.6 4.8 L19.8 1.6 C20.3 1.3 21 1.6 21 2.3 V10.7 C21 11.4 20.3 11.7 19.8 11.4 L15.6 8.2 Z" fill="#8c8c8c"/></svg><svg class="ic" width="18" height="20" viewBox="0 0 18 20" style="left:111px;top:8px" aria-hidden="true"><path d="M3.6 17.6 V19.2 H17.2 V3.6 H15.6" fill="none" stroke="#8c8c8c" stroke-width="1.2"/><rect x="0.8" y="0.8" width="14.4" height="16.4" rx="1" fill="#fcfcfc" stroke="#8c8c8c" stroke-width="1.3"/><path d="M6.4 4.5h6M3.8 7.5h8.6M3.8 10.5h8.6M3.8 13.5h8.6" stroke="#8c8c8c" stroke-width="1.1"/></svg></td><td class="st" style="letter-spacing:-.02px">Active</td><td class="act"><a style="letter-spacing:-.09px">View</a><span class="sep">|</span><a style="letter-spacing:.09px">Delete</a></td></tr>
<tr><td class="c0"><span class="cb"></span></td><td style="letter-spacing:.10px">Allen Paul's Monitor - 2</td><td></td><td style="letter-spacing:.10px">Office 1</td><td style="letter-spacing:-.03px">Dell</td><td style="letter-spacing:-.28px">AADX</td><td style="letter-spacing:.11px">Kearny</td><td style="letter-spacing:.19px">Monitor</td><td style="letter-spacing:.16px">03/29/2013 09:02 AM</td><td class="docs"><svg class="ic" width="20" height="16" viewBox="0 0 20 16" style="left:8px;top:10px" aria-hidden="true"><path fill-rule="evenodd" d="M2.2 3 H5.4 L6.6 0.9 C6.8 0.5 7.2 0.3 7.6 0.3 H12.4 C12.8 0.3 13.2 0.5 13.4 0.9 L14.6 3 H17.8 C19 3 20 4 20 5.2 V13.8 C20 15 19 16 17.8 16 H2.2 C1 16 0 15 0 13.8 V5.2 C0 4 1 3 2.2 3 Z M10 4.3 A4.9 4.9 0 1 0 10 14.1 A4.9 4.9 0 1 0 10 4.3 Z" fill="#111"/><circle cx="10" cy="9.2" r="3" fill="#111"/><circle cx="17.2" cy="5.4" r="0.8" fill="#fff"/></svg><svg class="ic" width="12" height="20" viewBox="0 0 12 20" style="left:46px;top:8px" aria-hidden="true"><rect x="3.2" y="0.3" width="5.6" height="12" rx="2.8" fill="#959595"/><path d="M1 8.2 V9.6 C1 12.4 3.2 14.6 6 14.6 C8.8 14.6 11 12.4 11 9.6 V8.2" fill="none" stroke="#959595" stroke-width="1.3"/><path d="M6 14.6 V18.6 M2.6 19 H9.4" stroke="#959595" stroke-width="1.3"/></svg><svg class="ic" width="20" height="12.5" viewBox="0 0 21 13" style="left:76px;top:11.5px" aria-hidden="true"><rect x="0" y="0.5" width="14.6" height="12" rx="1.6" fill="#8c8c8c"/><path d="M15.6 4.8 L19.8 1.6 C20.3 1.3 21 1.6 21 2.3 V10.7 C21 11.4 20.3 11.7 19.8 11.4 L15.6 8.2 Z" fill="#8c8c8c"/></svg><svg class="ic" width="18" height="20" viewBox="0 0 18 20" style="left:111px;top:8px" aria-hidden="true"><path d="M3.6 17.6 V19.2 H17.2 V3.6 H15.6" fill="none" stroke="#8c8c8c" stroke-width="1.2"/><rect x="0.8" y="0.8" width="14.4" height="16.4" rx="1" fill="#fcfcfc" stroke="#8c8c8c" stroke-width="1.3"/><path d="M6.4 4.5h6M3.8 7.5h8.6M3.8 10.5h8.6M3.8 13.5h8.6" stroke="#8c8c8c" stroke-width="1.1"/></svg></td><td class="st" style="letter-spacing:.10px">Check Out</td><td class="act"><a style="letter-spacing:-.09px">View</a><span class="sep">|</span><a style="letter-spacing:.09px">Delete</a></td></tr>
<tr><td class="c0"><span class="cb"></span></td><td style="letter-spacing:.06px">Allen Paul's Printer</td><td style="letter-spacing:.20px">$324.73</td><td></td><td style="letter-spacing:-.22px">HP</td><td style="letter-spacing:-.28px">AADV</td><td style="letter-spacing:.11px">Kearny</td><td style="letter-spacing:.11px">Printer</td><td style="letter-spacing:.16px">03/29/2013 10:40 AM</td><td class="docs"><svg class="ic" width="20" height="16" viewBox="0 0 20 16" style="left:8px;top:10px" aria-hidden="true"><path fill-rule="evenodd" d="M2.2 3 H5.4 L6.6 0.9 C6.8 0.5 7.2 0.3 7.6 0.3 H12.4 C12.8 0.3 13.2 0.5 13.4 0.9 L14.6 3 H17.8 C19 3 20 4 20 5.2 V13.8 C20 15 19 16 17.8 16 H2.2 C1 16 0 15 0 13.8 V5.2 C0 4 1 3 2.2 3 Z M10 4.3 A4.9 4.9 0 1 0 10 14.1 A4.9 4.9 0 1 0 10 4.3 Z" fill="#111"/><circle cx="10" cy="9.2" r="3" fill="#111"/><circle cx="17.2" cy="5.4" r="0.8" fill="#fff"/></svg><svg class="ic" width="12" height="20" viewBox="0 0 12 20" style="left:46px;top:8px" aria-hidden="true"><rect x="3.2" y="0.3" width="5.6" height="12" rx="2.8" fill="#959595"/><path d="M1 8.2 V9.6 C1 12.4 3.2 14.6 6 14.6 C8.8 14.6 11 12.4 11 9.6 V8.2" fill="none" stroke="#959595" stroke-width="1.3"/><path d="M6 14.6 V18.6 M2.6 19 H9.4" stroke="#959595" stroke-width="1.3"/></svg><svg class="ic" width="20" height="12.5" viewBox="0 0 21 13" style="left:76px;top:11.5px" aria-hidden="true"><rect x="0" y="0.5" width="14.6" height="12" rx="1.6" fill="#8c8c8c"/><path d="M15.6 4.8 L19.8 1.6 C20.3 1.3 21 1.6 21 2.3 V10.7 C21 11.4 20.3 11.7 19.8 11.4 L15.6 8.2 Z" fill="#8c8c8c"/></svg><svg class="ic" width="18" height="20" viewBox="0 0 18 20" style="left:111px;top:8px" aria-hidden="true"><path d="M3.6 17.6 V19.2 H17.2 V3.6 H15.6" fill="none" stroke="#8c8c8c" stroke-width="1.2"/><rect x="0.8" y="0.8" width="14.4" height="16.4" rx="1" fill="#fcfcfc" stroke="#8c8c8c" stroke-width="1.3"/><path d="M6.4 4.5h6M3.8 7.5h8.6M3.8 10.5h8.6M3.8 13.5h8.6" stroke="#8c8c8c" stroke-width="1.1"/></svg></td><td class="st" style="letter-spacing:.23px">returned</td><td class="act"><a style="letter-spacing:-.09px">View</a><span class="sep">|</span><a style="letter-spacing:.09px">Delete</a></td></tr>
<tr><td class="c0"><span class="cb"></span></td><td style="letter-spacing:.08px">Allen Paul's Tower</td><td style="letter-spacing:.20px">$633.00</td><td></td><td style="letter-spacing:-.03px">Dell</td><td style="letter-spacing:-.28px">AADY</td><td style="letter-spacing:.11px">Kearny</td><td style="letter-spacing:.22px">Tower</td><td style="letter-spacing:.16px">03/28/2013 05:04 PM</td><td class="docs"><svg class="ic" width="20" height="16" viewBox="0 0 20 16" style="left:8px;top:10px" aria-hidden="true"><path fill-rule="evenodd" d="M2.2 3 H5.4 L6.6 0.9 C6.8 0.5 7.2 0.3 7.6 0.3 H12.4 C12.8 0.3 13.2 0.5 13.4 0.9 L14.6 3 H17.8 C19 3 20 4 20 5.2 V13.8 C20 15 19 16 17.8 16 H2.2 C1 16 0 15 0 13.8 V5.2 C0 4 1 3 2.2 3 Z M10 4.3 A4.9 4.9 0 1 0 10 14.1 A4.9 4.9 0 1 0 10 4.3 Z" fill="#111"/><circle cx="10" cy="9.2" r="3" fill="#111"/><circle cx="17.2" cy="5.4" r="0.8" fill="#fff"/></svg><svg class="ic" width="12" height="20" viewBox="0 0 12 20" style="left:46px;top:8px" aria-hidden="true"><rect x="3.2" y="0.3" width="5.6" height="12" rx="2.8" fill="#959595"/><path d="M1 8.2 V9.6 C1 12.4 3.2 14.6 6 14.6 C8.8 14.6 11 12.4 11 9.6 V8.2" fill="none" stroke="#959595" stroke-width="1.3"/><path d="M6 14.6 V18.6 M2.6 19 H9.4" stroke="#959595" stroke-width="1.3"/></svg><svg class="ic" width="20" height="12.5" viewBox="0 0 21 13" style="left:76px;top:11.5px" aria-hidden="true"><rect x="0" y="0.5" width="14.6" height="12" rx="1.6" fill="#8c8c8c"/><path d="M15.6 4.8 L19.8 1.6 C20.3 1.3 21 1.6 21 2.3 V10.7 C21 11.4 20.3 11.7 19.8 11.4 L15.6 8.2 Z" fill="#8c8c8c"/></svg><svg class="ic" width="18" height="20" viewBox="0 0 18 20" style="left:111px;top:8px" aria-hidden="true"><path d="M3.6 17.6 V19.2 H17.2 V3.6 H15.6" fill="none" stroke="#8c8c8c" stroke-width="1.2"/><rect x="0.8" y="0.8" width="14.4" height="16.4" rx="1" fill="#fcfcfc" stroke="#8c8c8c" stroke-width="1.3"/><path d="M6.4 4.5h6M3.8 7.5h8.6M3.8 10.5h8.6M3.8 13.5h8.6" stroke="#8c8c8c" stroke-width="1.1"/></svg></td><td class="st" style="letter-spacing:.10px">Check Out</td><td class="act"><a style="letter-spacing:-.09px">View</a><span class="sep">|</span><a style="letter-spacing:.09px">Delete</a></td></tr>
<tr><td class="c0"><span class="cb"></span></td><td style="letter-spacing:.16px">Amanda Loyd's Laptop</td><td style="letter-spacing:.20px">$615.00</td><td></td><td style="letter-spacing:-.03px">Dell</td><td style="letter-spacing:-.28px">AAAC</td><td style="letter-spacing:.11px">Kearny</td><td style="letter-spacing:.20px">Laptop</td><td style="letter-spacing:.16px">03/28/2013 04:51 PM</td><td class="docs"><svg class="ic" width="20" height="16" viewBox="0 0 20 16" style="left:8px;top:10px" aria-hidden="true"><path fill-rule="evenodd" d="M2.2 3 H5.4 L6.6 0.9 C6.8 0.5 7.2 0.3 7.6 0.3 H12.4 C12.8 0.3 13.2 0.5 13.4 0.9 L14.6 3 H17.8 C19 3 20 4 20 5.2 V13.8 C20 15 19 16 17.8 16 H2.2 C1 16 0 15 0 13.8 V5.2 C0 4 1 3 2.2 3 Z M10 4.3 A4.9 4.9 0 1 0 10 14.1 A4.9 4.9 0 1 0 10 4.3 Z" fill="#111"/><circle cx="10" cy="9.2" r="3" fill="#111"/><circle cx="17.2" cy="5.4" r="0.8" fill="#fff"/></svg><svg class="ic" width="12" height="20" viewBox="0 0 12 20" style="left:46px;top:8px" aria-hidden="true"><rect x="3.2" y="0.3" width="5.6" height="12" rx="2.8" fill="#959595"/><path d="M1 8.2 V9.6 C1 12.4 3.2 14.6 6 14.6 C8.8 14.6 11 12.4 11 9.6 V8.2" fill="none" stroke="#959595" stroke-width="1.3"/><path d="M6 14.6 V18.6 M2.6 19 H9.4" stroke="#959595" stroke-width="1.3"/></svg><svg class="ic" width="20" height="12.5" viewBox="0 0 21 13" style="left:76px;top:11.5px" aria-hidden="true"><rect x="0" y="0.5" width="14.6" height="12" rx="1.6" fill="#8c8c8c"/><path d="M15.6 4.8 L19.8 1.6 C20.3 1.3 21 1.6 21 2.3 V10.7 C21 11.4 20.3 11.7 19.8 11.4 L15.6 8.2 Z" fill="#8c8c8c"/></svg><svg class="ic" width="18" height="20" viewBox="0 0 18 20" style="left:111px;top:8px" aria-hidden="true"><path d="M3.6 17.6 V19.2 H17.2 V3.6 H15.6" fill="none" stroke="#8c8c8c" stroke-width="1.2"/><rect x="0.8" y="0.8" width="14.4" height="16.4" rx="1" fill="#fcfcfc" stroke="#8c8c8c" stroke-width="1.3"/><path d="M6.4 4.5h6M3.8 7.5h8.6M3.8 10.5h8.6M3.8 13.5h8.6" stroke="#8c8c8c" stroke-width="1.1"/></svg></td><td class="st" style="letter-spacing:-.02px">Active</td><td class="act"><a style="letter-spacing:-.09px">View</a><span class="sep">|</span><a style="letter-spacing:.09px">Delete</a></td></tr>
<tr><td class="c0"><span class="cb"></span></td><td style="letter-spacing:.16px">Amanda Loyd's Monitor</td><td></td><td style="letter-spacing:.10px">Office 1</td><td></td><td style="letter-spacing:-.28px">AAAD</td><td style="letter-spacing:.11px">Kearny</td><td style="letter-spacing:.19px">Monitor</td><td style="letter-spacing:.16px">03/29/2013 09:03 AM</td><td class="docs"><svg class="ic" width="20" height="16" viewBox="0 0 20 16" style="left:8px;top:10px" aria-hidden="true"><path fill-rule="evenodd" d="M2.2 3 H5.4 L6.6 0.9 C6.8 0.5 7.2 0.3 7.6 0.3 H12.4 C12.8 0.3 13.2 0.5 13.4 0.9 L14.6 3 H17.8 C19 3 20 4 20 5.2 V13.8 C20 15 19 16 17.8 16 H2.2 C1 16 0 15 0 13.8 V5.2 C0 4 1 3 2.2 3 Z M10 4.3 A4.9 4.9 0 1 0 10 14.1 A4.9 4.9 0 1 0 10 4.3 Z" fill="#111"/><circle cx="10" cy="9.2" r="3" fill="#111"/><circle cx="17.2" cy="5.4" r="0.8" fill="#fff"/></svg><svg class="ic" width="12" height="20" viewBox="0 0 12 20" style="left:46px;top:8px" aria-hidden="true"><rect x="3.2" y="0.3" width="5.6" height="12" rx="2.8" fill="#959595"/><path d="M1 8.2 V9.6 C1 12.4 3.2 14.6 6 14.6 C8.8 14.6 11 12.4 11 9.6 V8.2" fill="none" stroke="#959595" stroke-width="1.3"/><path d="M6 14.6 V18.6 M2.6 19 H9.4" stroke="#959595" stroke-width="1.3"/></svg><svg class="ic" width="20" height="12.5" viewBox="0 0 21 13" style="left:76px;top:11.5px" aria-hidden="true"><rect x="0" y="0.5" width="14.6" height="12" rx="1.6" fill="#8c8c8c"/><path d="M15.6 4.8 L19.8 1.6 C20.3 1.3 21 1.6 21 2.3 V10.7 C21 11.4 20.3 11.7 19.8 11.4 L15.6 8.2 Z" fill="#8c8c8c"/></svg><svg class="ic" width="18" height="20" viewBox="0 0 18 20" style="left:111px;top:8px" aria-hidden="true"><path d="M3.6 17.6 V19.2 H17.2 V3.6 H15.6" fill="none" stroke="#8c8c8c" stroke-width="1.2"/><rect x="0.8" y="0.8" width="14.4" height="16.4" rx="1" fill="#fcfcfc" stroke="#8c8c8c" stroke-width="1.3"/><path d="M6.4 4.5h6M3.8 7.5h8.6M3.8 10.5h8.6M3.8 13.5h8.6" stroke="#8c8c8c" stroke-width="1.1"/></svg></td><td class="st" style="letter-spacing:.15px">Repaired</td><td class="act"><a style="letter-spacing:-.09px">View</a><span class="sep">|</span><a style="letter-spacing:.09px">Delete</a></td></tr>
<tr><td class="c0"><span class="cb"></span></td><td style="letter-spacing:.13px">Andrew Jackson's Laptop</td><td></td><td></td><td style="letter-spacing:-.03px">Dell</td><td style="letter-spacing:-.23px">AAAQ</td><td style="letter-spacing:.11px">Frisco Office</td><td style="letter-spacing:.20px">Laptop</td><td style="letter-spacing:.16px">04/24/2013 02:15 PM</td><td class="docs"><svg class="ic" width="20" height="16" viewBox="0 0 20 16" style="left:8px;top:10px" aria-hidden="true"><path fill-rule="evenodd" d="M2.2 3 H5.4 L6.6 0.9 C6.8 0.5 7.2 0.3 7.6 0.3 H12.4 C12.8 0.3 13.2 0.5 13.4 0.9 L14.6 3 H17.8 C19 3 20 4 20 5.2 V13.8 C20 15 19 16 17.8 16 H2.2 C1 16 0 15 0 13.8 V5.2 C0 4 1 3 2.2 3 Z M10 4.3 A4.9 4.9 0 1 0 10 14.1 A4.9 4.9 0 1 0 10 4.3 Z" fill="#111"/><circle cx="10" cy="9.2" r="3" fill="#111"/><circle cx="17.2" cy="5.4" r="0.8" fill="#fff"/></svg><svg class="ic" width="12" height="20" viewBox="0 0 12 20" style="left:46px;top:8px" aria-hidden="true"><rect x="3.2" y="0.3" width="5.6" height="12" rx="2.8" fill="#959595"/><path d="M1 8.2 V9.6 C1 12.4 3.2 14.6 6 14.6 C8.8 14.6 11 12.4 11 9.6 V8.2" fill="none" stroke="#959595" stroke-width="1.3"/><path d="M6 14.6 V18.6 M2.6 19 H9.4" stroke="#959595" stroke-width="1.3"/></svg><svg class="ic" width="20" height="12.5" viewBox="0 0 21 13" style="left:76px;top:11.5px" aria-hidden="true"><rect x="0" y="0.5" width="14.6" height="12" rx="1.6" fill="#8c8c8c"/><path d="M15.6 4.8 L19.8 1.6 C20.3 1.3 21 1.6 21 2.3 V10.7 C21 11.4 20.3 11.7 19.8 11.4 L15.6 8.2 Z" fill="#8c8c8c"/></svg><svg class="ic" width="18" height="20" viewBox="0 0 18 20" style="left:111px;top:8px" aria-hidden="true"><path d="M3.6 17.6 V19.2 H17.2 V3.6 H15.6" fill="none" stroke="#8c8c8c" stroke-width="1.2"/><rect x="0.8" y="0.8" width="14.4" height="16.4" rx="1" fill="#fcfcfc" stroke="#8c8c8c" stroke-width="1.3"/><path d="M6.4 4.5h6M3.8 7.5h8.6M3.8 10.5h8.6M3.8 13.5h8.6" stroke="#8c8c8c" stroke-width="1.1"/></svg></td><td class="st" style="letter-spacing:.10px">Check Out</td><td class="act"><a style="letter-spacing:-.09px">View</a><span class="sep">|</span><a style="letter-spacing:.09px">Delete</a></td></tr>
</tbody>
</table>
</div>
</section>
</div>
<div class="topline"></div>
<div id="sb"><span class="up"></span><span class="thumb"></span><span class="down"></span></div>
</body>
</html>
